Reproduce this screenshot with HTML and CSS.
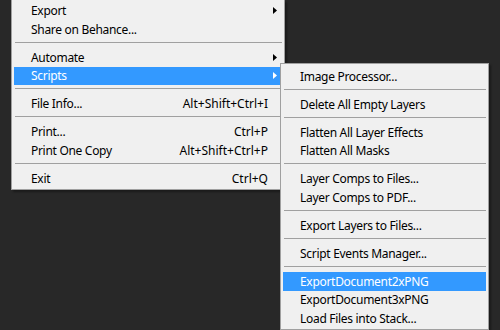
FILE: index.html
```html
<!DOCTYPE html>
<html>
<head>
    <title>File menu - Scripts</title>
    <link rel="stylesheet" href="styles.css">
</head>
<body>
    <div class="screen">
        <!-- main File menu, top part is cut off by the screenshot -->
        <div class="menu main-menu">
            <div class="item">Export<svg class="arrow" width="4" height="7" viewBox="0 0 4 7"><polygon points="0,0 4,3.5 0,7"/></svg></div>
            <div class="item">Share on Behance...</div>
            <div class="sep"></div>
            <div class="item">Automate<svg class="arrow" width="4" height="7" viewBox="0 0 4 7"><polygon points="0,0 4,3.5 0,7"/></svg></div>
            <div class="item active">Scripts<svg class="arrow" width="4" height="7" viewBox="0 0 4 7"><polygon points="0,0 4,3.5 0,7"/></svg></div>
            <div class="sep"></div>
            <div class="item">File Info...<span class="key">Alt+Shift+Ctrl+I</span></div>
            <div class="sep"></div>
            <div class="item">Print...<span class="key">Ctrl+P</span></div>
            <div class="item">Print One Copy<span class="key">Alt+Shift+Ctrl+P</span></div>
            <div class="sep"></div>
            <div class="item">Exit<span class="key">Ctrl+Q</span></div>
        </div>

        <!-- Scripts flyout -->
        <div class="menu flyout">
            <div class="item">Image Processor...</div>
            <div class="sep"></div>
            <div class="item">Delete All Empty Layers</div>
            <div class="sep"></div>
            <div class="item">Flatten All Layer Effects</div>
            <div class="item">Flatten All Masks</div>
            <div class="sep"></div>
            <div class="item">Layer Comps to Files...</div>
            <div class="item">Layer Comps to PDF...</div>
            <div class="sep"></div>
            <div class="item">Export Layers to Files...</div>
            <div class="sep"></div>
            <div class="item">Script Events Manager...</div>
            <div class="sep"></div>
            <div class="item active">ExportDocument2xPNG</div>
            <div class="item">ExportDocument3xPNG</div>
            <div class="item">Load Files into Stack...</div>
        </div>
    </div>
</body>
</html>
```

FILE: styles.css
```css
html, body {
    margin: 0;
    height: 100%;
    overflow: hidden;
}
body {
    background: #282828;
    font-family: 'Noto Sans', 'Open Sans', sans-serif;
    font-size: 12px;
    letter-spacing: -0.3px;
    color: #000;
}
.screen {
    position: relative;
    height: 100%;
    padding-left: 11px;
}

.menu {
    background: #f0f0f0;
    border: 1px solid #a0a0a0;
    box-shadow: 2px 2px 2px rgba(0, 0, 0, 0.35);
    padding: 3px 2px 1px 2px;
    box-sizing: border-box;
}
.main-menu {
    width: 274px;
    border-top: none;
    padding-top: 1.5px;
}

/* flyout lies over the right edge of the main menu */
.flyout {
    position: absolute;
    left: 280px;
    top: 63px;
    width: 209px;
}

.item {
    display: flex;
    align-items: center;
    height: 18.5px;
    padding-left: 17px;
    white-space: nowrap;
}
.item.active {
    background: #3399ff;
    color: #fff;
}
.item .key {
    margin-left: auto;
    padding-right: 14px;
    letter-spacing: 0;
}
.item .arrow {
    margin-left: auto;
    margin-right: 5px;
    fill: #000;
}
.item.active .arrow {
    fill: #fff;
}

.sep {
    height: 1px;
    background: #a0a0a0;
    margin: 3px 0 5.5px 1px;
}
```
